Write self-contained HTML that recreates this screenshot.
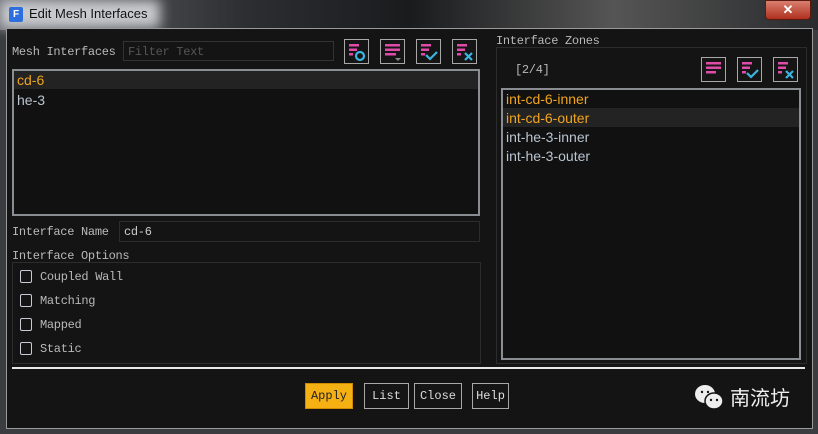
<!DOCTYPE html><html><head><style>
body{margin:0;width:818px;height:434px;overflow:hidden;background:#3a3c40;position:relative;font-family:"Liberation Mono",monospace;}
.a{position:absolute}
.lbl{font-size:12px;color:#b9b9b9;font-family:"Liberation Mono",monospace;letter-spacing:-0.3px}
.ib{position:absolute;width:23px;height:23px;border:1px solid #a8a8a8;background:#151515}
.li{position:absolute;font:14px "Liberation Sans",sans-serif;}
.cb{position:absolute;left:20px;width:10px;height:11px;border:1.5px solid #c8ccd2;border-radius:2px}
.btn{position:absolute;top:383px;height:24px;border:1px solid #a8a8a8;color:#ddd;font-size:12px;text-align:center;line-height:24px;background:#151515}
</style></head><body>
<div class="a" style="left:0;top:0;width:818px;height:30px;background:linear-gradient(90deg,#6c6f74 0%,#2c2e31 30%,#1a1b1d 50%,#555 75%,#2a2b2d 100%)"></div>
<div class="a" style="left:0;top:0;width:160px;height:28px;background:#c9cbcf;filter:blur(6px)"></div>
<div class="a" style="left:9px;top:7px;width:14px;height:15px;background:#2e6fe0;border-radius:2px;color:#fff;font:bold 10px 'Liberation Sans';text-align:center;line-height:15px">F</div>
<div class="a" style="left:29px;top:6px;font:13px 'Liberation Sans',sans-serif;color:#111">Edit Mesh Interfaces</div>
<div class="a" style="left:765px;top:0;width:44px;height:18px;background:linear-gradient(#d98070,#b0301e);border:1px solid #5a1a10;border-radius:0 0 4px 4px;color:#fff;font:bold 13px 'Liberation Sans';text-align:center;line-height:17px">✕</div>
<div class="a" style="left:6px;top:28px;width:805px;height:399px;background:#141414;border:1px solid #9a9a9a"></div>

<div class="a lbl" style="left:12px;top:45px">Mesh Interfaces</div>
<div class="a lbl" style="left:123px;top:41px;width:211px;height:20px;border:1px solid #333;color:#555;line-height:20px;padding-left:4px;box-sizing:border-box">Filter Text</div>

<svg width="0" height="0" style="position:absolute"><defs>
<g id="lines"><rect x="4" y="4" width="10" height="2.5" fill="#e04aa8"/><rect x="4" y="8.5" width="8" height="2.5" fill="#e04aa8"/><rect x="4" y="13" width="4" height="2.5" fill="#e04aa8"/></g>
</defs></svg>
<div class="ib" style="left:344px;top:39px"><svg width="23" height="23"><use href="#lines"/><circle cx="15" cy="16" r="4" stroke="#3cb4e0" stroke-width="2.2" fill="none"/></svg></div>
<div class="ib" style="left:380px;top:39px"><svg width="23" height="23"><rect x="4" y="4" width="15" height="2.5" fill="#e04aa8"/><rect x="4" y="8.5" width="15" height="2.5" fill="#e04aa8"/><rect x="4" y="13" width="11" height="2.5" fill="#e04aa8"/><path d="M14 18h6l-3 3z" fill="#888"/></svg></div>
<div class="ib" style="left:416px;top:39px"><svg width="23" height="23"><use href="#lines"/><path d="M9 15l4 4 7-7" stroke="#3cb4e0" stroke-width="2.2" fill="none"/></svg></div>
<div class="ib" style="left:452px;top:39px"><svg width="23" height="23"><use href="#lines"/><path d="M12 13l7 7M19 13l-7 7" stroke="#3cb4e0" stroke-width="2.2" fill="none"/></svg></div>

<div class="a" style="left:12px;top:69px;width:464px;height:143px;border:2px solid #8a8d92;background:#111"></div>
<div class="a" style="left:14px;top:71px;width:464px;height:18px;background:#232323"></div>
<div class="li" style="left:17px;top:72px;color:#f0a41c">cd-6</div>
<div class="li" style="left:17px;top:92px;color:#b8c4d0">he-3</div>

<div class="a lbl" style="left:12px;top:225px">Interface Name</div>
<div class="a lbl" style="left:119px;top:221px;width:361px;height:21px;border:1px solid #2c2c2c;line-height:21px;padding-left:4px;box-sizing:border-box;color:#ccc">cd-6</div>
<div class="a lbl" style="left:12px;top:249px">Interface Options</div>
<div class="a" style="left:12px;top:262px;width:467px;height:100px;border:1px solid #2c2c2c"></div>
<div class="cb" style="top:270px"></div><div class="a lbl" style="left:40px;top:270px">Coupled Wall</div>
<div class="cb" style="top:294px"></div><div class="a lbl" style="left:40px;top:294px">Matching</div>
<div class="cb" style="top:318px"></div><div class="a lbl" style="left:40px;top:318px">Mapped</div>
<div class="cb" style="top:342px"></div><div class="a lbl" style="left:40px;top:342px">Static</div>

<div class="a lbl" style="left:496px;top:34px">Interface Zones</div>
<div class="a" style="left:496px;top:47px;width:309px;height:315px;border:1px solid #2c2c2c"></div>
<div class="a lbl" style="left:515px;top:63px">[2/4]</div>
<div class="ib" style="left:701px;top:57px"><svg width="23" height="23"><rect x="4" y="4" width="15" height="2.5" fill="#e04aa8"/><rect x="4" y="8.5" width="15" height="2.5" fill="#e04aa8"/><rect x="4" y="13" width="10" height="2.5" fill="#e04aa8"/></svg></div>
<div class="ib" style="left:737px;top:57px"><svg width="23" height="23"><use href="#lines"/><path d="M9 15l4 4 7-7" stroke="#3cb4e0" stroke-width="2.2" fill="none"/></svg></div>
<div class="ib" style="left:773px;top:57px"><svg width="23" height="23"><use href="#lines"/><path d="M12 13l7 7M19 13l-7 7" stroke="#3cb4e0" stroke-width="2.2" fill="none"/></svg></div>
<div class="a" style="left:501px;top:88px;width:296px;height:268px;border:2px solid #8a8d92;background:#111"></div>
<div class="a" style="left:503px;top:108px;width:296px;height:19px;background:#232323"></div>
<div class="li" style="left:506px;top:91px;color:#f0a41c">int-cd-6-inner</div>
<div class="li" style="left:506px;top:110px;color:#f0a41c">int-cd-6-outer</div>
<div class="li" style="left:506px;top:129px;color:#b8c4d0">int-he-3-inner</div>
<div class="li" style="left:506px;top:148px;color:#b8c4d0">int-he-3-outer</div>

<div class="a" style="left:12px;top:367px;width:793px;height:2px;background:#e8e8e8"></div>
<div class="btn" style="left:305px;width:46px;background:#f5b014;border-color:#d08a00;color:#222">Apply</div>
<div class="btn" style="left:364px;width:43px">List</div>
<div class="btn" style="left:414px;width:46px">Close</div>
<div class="btn" style="left:472px;width:35px">Help</div>

<svg class="a" style="left:694px;top:384px" width="32" height="28"><ellipse cx="11" cy="10" rx="10" ry="9" fill="#eee"/><ellipse cx="20" cy="17" rx="9" ry="8" fill="#eee" stroke="#141414" stroke-width="1.5"/><circle cx="17" cy="16" r="1.2" fill="#141414"/><circle cx="23" cy="16" r="1.2" fill="#141414"/><circle cx="8" cy="8" r="1.2" fill="#141414"/><circle cx="14" cy="8" r="1.2" fill="#141414"/></svg>
<div class="a" style="left:730px;top:384px;font:20px 'Noto Sans CJK SC',sans-serif;color:#f0f0f0;line-height:26px">南流坊</div>
</body></html>
